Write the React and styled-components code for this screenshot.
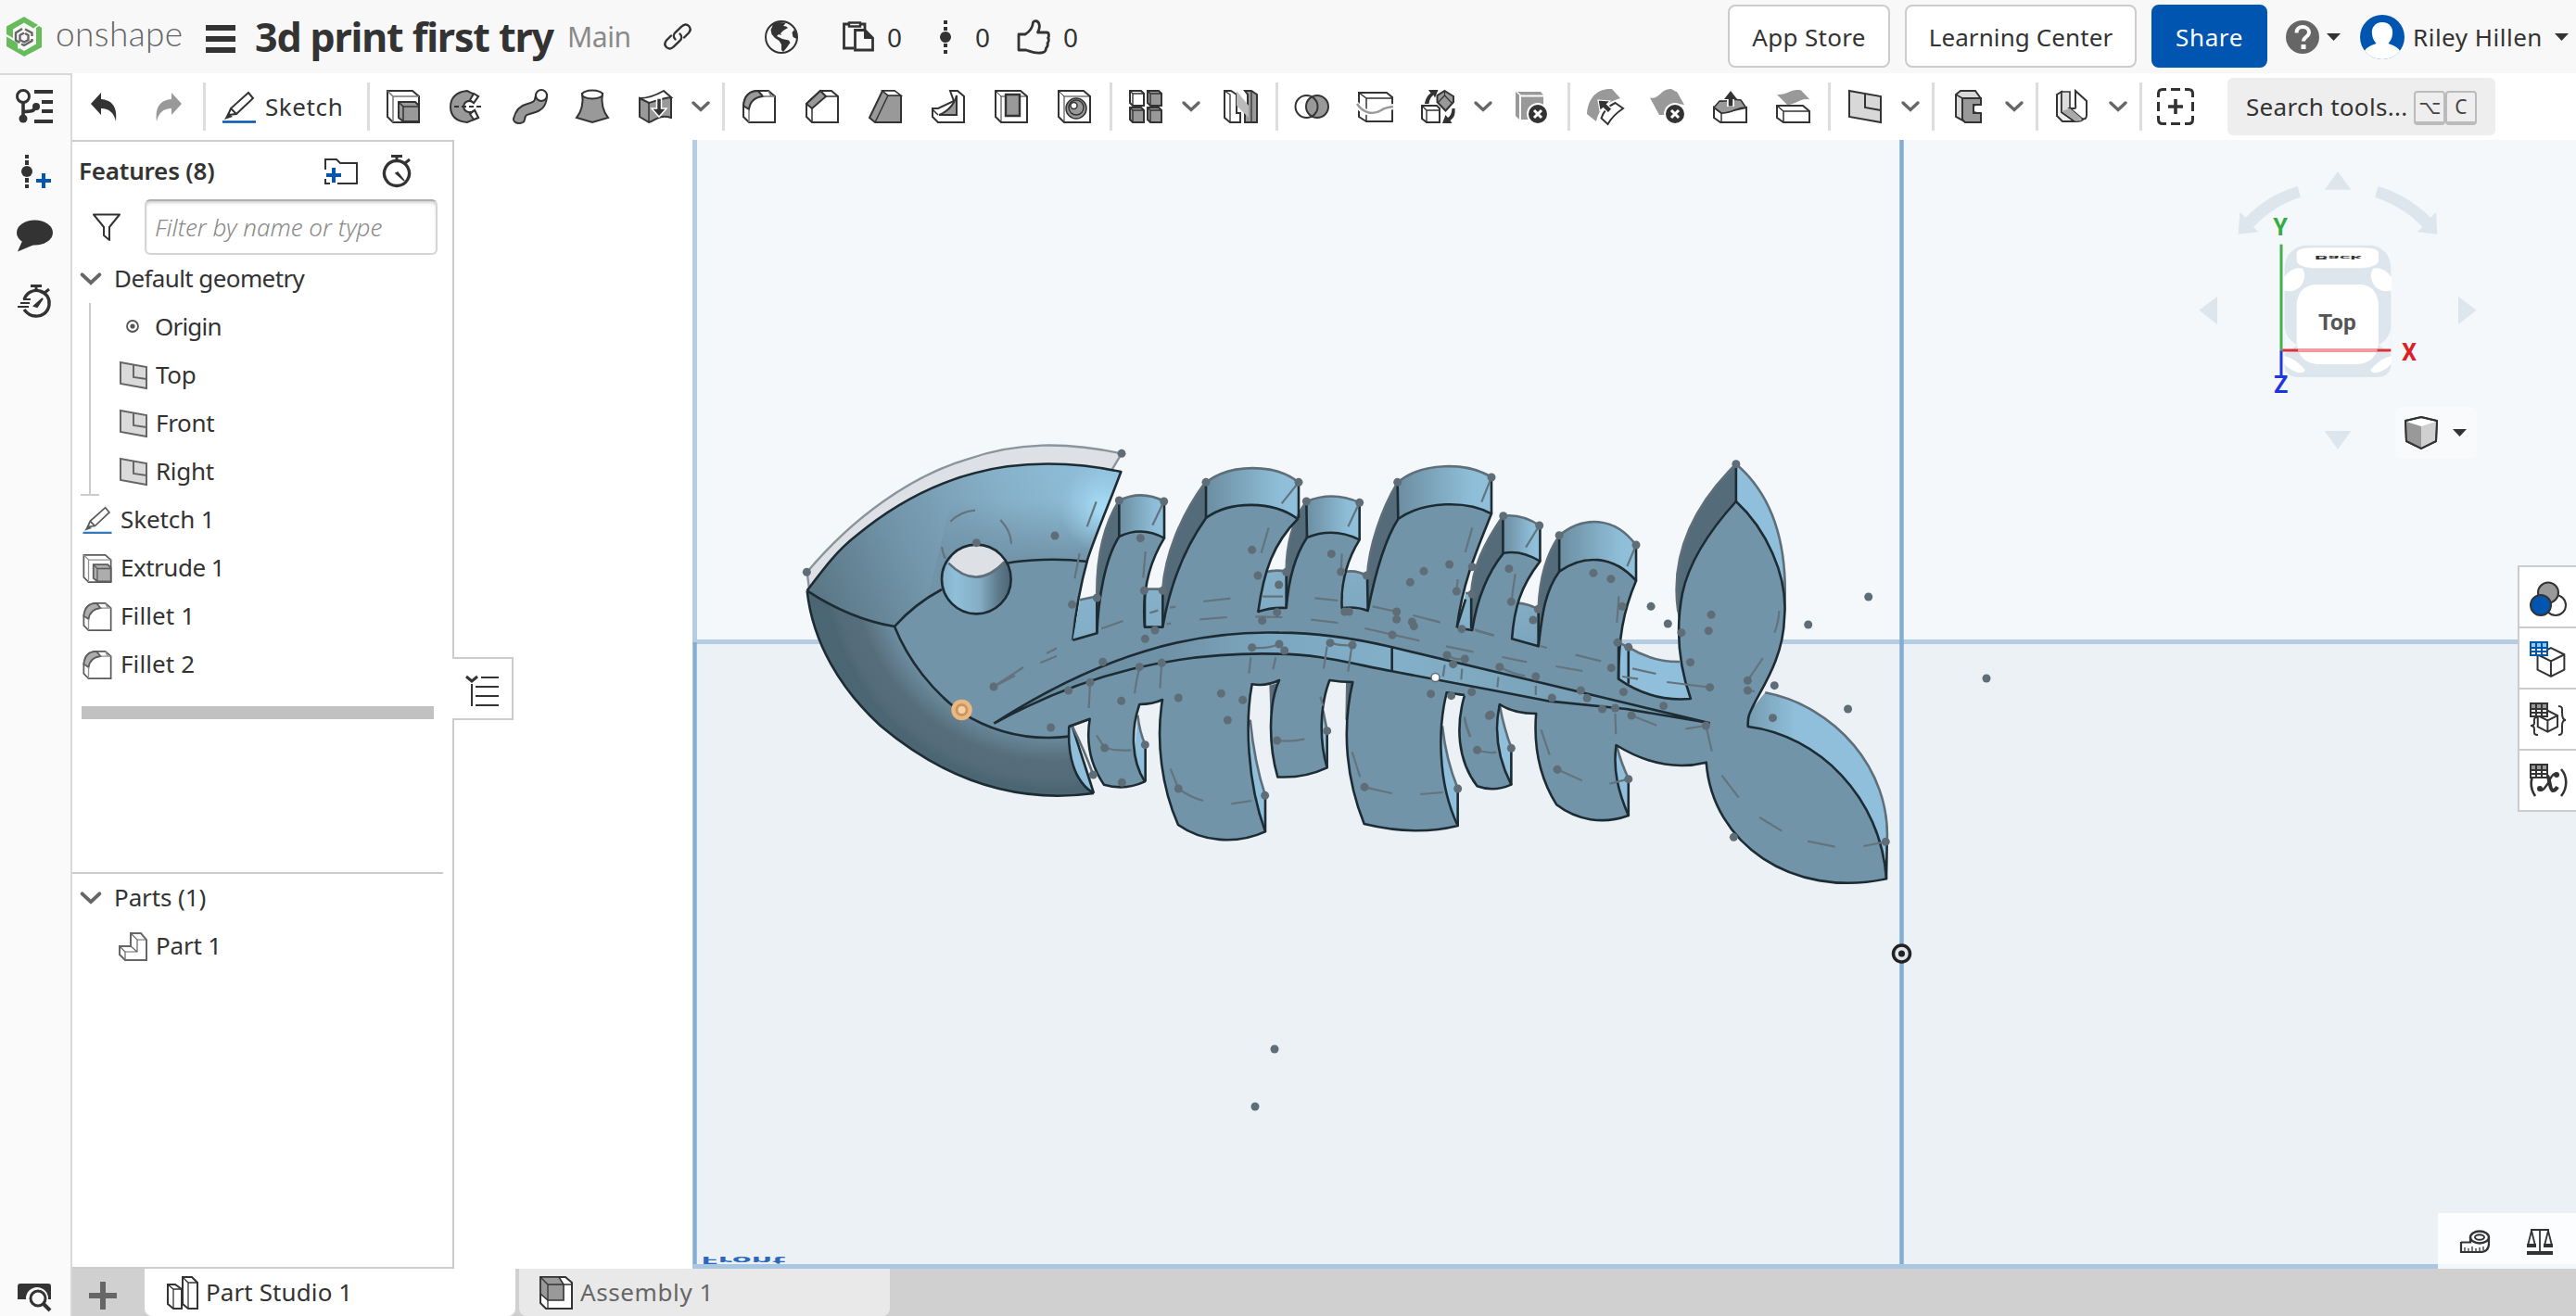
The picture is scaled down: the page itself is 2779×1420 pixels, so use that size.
import React from "react";
import styled, { createGlobalStyle } from "styled-components";

const INK = "#333333";
const GREY = "#999999";
const LINE = "#cccccc";
const BLUE = "#0055b0";

const Global = createGlobalStyle`
  * { box-sizing: border-box; }
  body { margin: 0; background: #fff; }
`;

const Page = styled.div`
  display: flex;
  flex-direction: column;
  width: 2779px;
  height: 1420px;
  overflow: hidden;
  color: ${INK};
  font-family: "Noto Sans", "Open Sans", sans-serif;
  font-size: 26px;
  line-height: 36px;
`;

const Text = styled.span`
  white-space: nowrap;
  letter-spacing: ${(p) => p.$ls || 0}px;
  color: ${(p) => p.$color || "inherit"};
  font-size: ${(p) => p.$size || 26}px;
  font-weight: ${(p) => p.$weight || 400};
  margin-left: ${(p) => p.$ml || 0}px;
`;

/* ---------- header ---------- */

const HeaderBar = styled.header`
  display: flex;
  align-items: center;
  height: 79px;
  flex: none;
  padding: 0 8px 0 7px;
  background: #f8f8f8;
`;

const Brand = styled(Text)`
  font-family: Lato, sans-serif;
  font-weight: 300;
  font-size: 37px;
  line-height: 40px;
  letter-spacing: 0.4px;
  color: #666;
  margin: 0 0 7px 15px;
  width: 138px;
`;

const Burger = styled.div`
  display: flex;
  flex-direction: column;
  gap: 6px;
  width: 32px;
  margin: 5px 0 0 24px;
  i { height: 6px; background: ${INK}; }
`;

const Title = styled.h1`
  margin: 0 0 0 21px;
  width: 324px;
  font-size: 43px;
  line-height: 50px;
  font-weight: 700;
  white-space: nowrap;
  letter-spacing: -1.15px;
`;

const Slot = styled.div`
  display: flex;
  align-items: center;
  flex: none;
  width: ${(p) => p.$w}px;
`;

const Spacer = styled.div`flex: 1;`;

const HeadButton = styled.button`
  flex: none;
  display: flex;
  align-items: center;
  justify-content: center;
  width: ${(p) => p.$w}px;
  height: 68px;
  margin: 0 16px 1px 0;
  padding: 1px 0 0;
  border-radius: 8px;
  border: 2px solid ${(p) => (p.$primary ? BLUE : LINE)};
  background: ${(p) => (p.$primary ? BLUE : "#fff")};
  color: ${(p) => (p.$primary ? "#fff" : INK)};
  font: inherit;
`;

/* ---------- body ---------- */

const Body = styled.div`
  display: flex;
  flex: 1;
  min-height: 0;
`;

const Rail = styled.nav`
  display: flex;
  flex-direction: column;
  flex: none;
  width: 78px;
  padding: 16px 0 3px 17px;
  background: #fafafa;
  border-top: 2px solid #d9d9d9;
  border-right: 2px solid #d9d9d9;
`;

const RailItem = styled.div`
  display: flex;
  align-items: flex-start;
  height: 70px;
`;

const Main = styled.div`
  display: flex;
  flex-direction: column;
  flex: 1;
  min-width: 0;
`;

const Toolbar = styled.div`
  display: flex;
  align-items: center;
  flex: none;
  height: 72px;
  background: #fff;
`;

const ToolGroup = styled.div`
  display: flex;
  align-items: center;
  gap: 32px;
  height: 52px;
  flex: none;
  padding-left: ${(p) => p.$pad || 18}px;
  padding-right: 20px;
  border-left: ${(p) => (p.$bare ? "none" : "3px solid #dddddd")};
`;

const MenuTool = styled.div`
  display: flex;
  align-items: center;
  gap: 21px;
  margin-right: -7px;
`;

const SketchTool = styled.div`
  display: flex;
  align-items: center;
  gap: 10px;
  width: 136px;
`;

const SearchBox = styled.div`
  display: flex;
  align-items: center;
  width: 289px;
  height: 62px;
  margin-left: 16px;
  padding-left: 20px;
  background: #eeeeee;
  border-radius: 6px;
`;

const Keys = styled.div`
  display: flex;
  margin: 2px 0 0 auto;
  padding-right: 20px;
`;

const Key = styled.kbd`
  width: 34px;
  height: 37px;
  border: 2px solid #bbb;
  border-bottom-width: 4px;
  border-radius: 4px;
  font-family: "Noto Sans", "DejaVu Sans", sans-serif;
  font-size: 21px;
  line-height: 31px;
  text-align: center;
  color: #444;
`;

const Workspace = styled.div`
  display: flex;
  flex: none;
  height: 1218px;
`;

const Panel = styled.aside`
  display: flex;
  flex-direction: column;
  flex: none;
  width: 412px;
  background: #fff;
  border: 2px solid ${LINE};
  border-left: 0;
`;

const PanelHead = styled.div`
  display: flex;
  align-items: center;
  height: 62px;
  padding: 2px 44px 0 7px;
  span { margin-bottom: 2px; }
`;

const FilterRow = styled.div`
  display: flex;
  align-items: center;
  height: 60px;
  padding-left: 22px;
`;

const FilterInput = styled.input`
  width: 316px;
  height: 60px;
  margin-left: 26px;
  padding: 0 0 1px 9px;
  border: 2px solid #d5d5d5;
  border-top-color: #b0b0b0;
  border-radius: 6px;
  box-shadow: inset 0 3px 4px -2px #bbb;
  font: italic 26px "Noto Sans", sans-serif;
  letter-spacing: 0;
  &::placeholder { color: #8a8a8a; opacity: 1; font-weight: 300; }
`;

const Row = styled.div`
  display: flex;
  align-items: center;
  flex: none;
  height: 52px;
  padding-left: ${(p) => p.$indent}px;
  gap: ${(p) => p.$gap || 10}px;
  span { margin-bottom: 2px; }
`;

const Branch = styled.div`
  margin-left: 18px;
  border-left: 2px solid ${LINE};
  height: 208px;
  position: relative;
  &::after {
    content: "";
    position: absolute;
    left: -11px;
    bottom: 0;
    width: 20px;
    height: 2px;
    background: ${LINE};
  }
`;

const RollbackBar = styled.div`
  height: 14px;
  width: 380px;
  margin: 19px 0 0 10px;
  background: #c1c1c1;
  flex: none;
`;

const PartsSection = styled.section`
  margin-top: auto;
  width: 400px;
  height: 426px;
  border-top: 2px solid ${LINE};
`;

const Viewport = styled.main`
  position: relative;
  flex: 1;
  overflow: visible;
  > svg { display: block; }
`;

const ListToggle = styled.div`
  position: absolute;
  left: -2px;
  top: 558px;
  width: 66px;
  height: 68px;
  padding: 16px 0 0 14px;
  background: #fff;
  border: 2px solid ${LINE};
  border-left: 0;
`;

const SidePanel = styled.div`
  position: absolute;
  right: 0;
  top: 459px;
  width: 63px;
  background: #fff;
  border: 2px solid ${LINE};
  border-width: 2px 0 0 2px;
`;

const SideCell = styled.div`
  height: 66px;
  padding: 14px 0 0 11px;
  border-bottom: 2px solid ${LINE};
`;

const MeasureBar = styled.div`
  position: absolute;
  right: 0;
  bottom: 0;
  display: flex;
  gap: 40px;
  width: 149px;
  height: 60px;
  padding: 17px 0 0 24px;
  background: rgba(255, 255, 255, 0.85);
`;

const ViewMenu = styled.div`
  position: absolute;
  left: 2094px;
  top: 288px;
  display: flex;
  align-items: center;
  gap: 16px;
  width: 88px;
  height: 56px;
  padding-left: 10px;
  background: #f8fafb;
  border-radius: 6px;
`;

const TabBar = styled.footer`
  display: flex;
  flex: none;
  height: 51px;
  background: #d0d0d0;
`;

const AddTab = styled.div`
  width: 78px;
  padding: 14px 0 0 18px;
`;

const Tab = styled.div`
  display: flex;
  align-items: center;
  gap: 8px;
  width: 400px;
  margin-right: 4px;
  padding: 0 0 0 ${(p) => (p.$active ? 24 : 22)}px;
  border-radius: 0 0 8px 8px;
  background: ${(p) => (p.$active ? "#ffffff" : "#e9e9e9")};
  color: ${(p) => (p.$active ? INK : "#666666")};
  span { margin-bottom: 1px; }
`;

/* ---------- icons ---------- */

const Icon = ({ w = 36, h = 36, vb, children, ...rest }) => (
  <svg width={w} height={h} viewBox={vb || `0 0 ${w} ${h}`} fill="none" stroke={INK} strokeWidth="2" style={{ flex: "none", overflow: "visible" }} {...rest}>
    {children}
  </svg>
);

const Chevron = ({ w = 20, h = 12 }) => (
  <Icon w={w} h={h} vb="0 0 20 12" stroke="#666" strokeWidth="3.4" strokeLinecap="round"><path d="M2 2L10 9.500L18 2" /></Icon>
);

const Caret = ({ color = INK }) => (
  <Icon w={15} h={8} stroke="none"><path d="M0 0H15L7.500 8Z" fill={color} /></Icon>
);

const Logo = () => (
  <Icon w={38} h={43} stroke="none">
    <path fill="#66bc5a" d="M19 0L34 9L29 12.500L19 6.500L7 13.500V23L0 19V10.500Z" />
    <path fill="#66bc5a" d="M35 10L38 12V33L19 43L14 40V34L19 37L32 29.500V12Z" />
    <path fill="#66bc5a" d="M0 21.500L12 28.500V34L14 35V40L0 32Z" />
    <path stroke="#666" strokeWidth="2.400" d="M17 13L10 17.500V25.500L14.500 28M16 29.500L19 31L27.500 26V24M27.500 21V17.500L20 13.500M19 17.500L14.500 20V25L19 27.500L23.500 25V20L20 18" />
  </Icon>
);

const LinkIcon = () => (
  <Icon w={30} h={29} strokeWidth="2.400" strokeLinecap="round">
    <path d="M12.500 17.500C10 15 10.500 12 12.500 10L19.500 3.500C22 1 25 1 27 3C29 5 29 8 27 10.500L22 15.500" />
    <path d="M17.500 11.500C20 14 19.500 17 17.500 19L10.500 25.500C8 28 5 28 3 26C1 24 1 21 3 18.500L8 13.500" />
  </Icon>
);

const Globe = () => (
  <Icon>
    <circle cx="18" cy="18" r="17" fill="#f8f8f8" />
    <path fill={INK} stroke="none" d="M9 3L15 2L23 2.500L20 6L23 6.500L25 8L20 11L17 14L18 16L15 15L13 17L17 19L19 20L26 21.500L27.500 24L24 29L20 34L18 32L18 26L15.500 22L11 19L7.500 15L6.500 10L8 7ZM32 10L29.500 13L30.500 18L34.500 20L35 16Z" />
  </Icon>
);

const Clipboard = () => (
  <Icon w={34} h={33} strokeWidth="2.800">
    <path d="M6 3H1.500V29H12M20 3H24V9" />
    <path d="M7 1.500H19V5.500H7Z" strokeWidth="2.400" />
    <path d="M13.500 9.500H24L32.500 18V31H13.500Z" />
    <path d="M23.500 10V18.500H32Z" fill={INK} strokeWidth="1" />
  </Icon>
);

const VersionDot = () => (
  <Icon w={12} h={36} stroke="none" fill={INK}>
    <circle cx="6" cy="18" r="6" />
    <path d="M4 0h4v4H4zM4 7h4v4H4zM4 25h4v4H4zM4 32h4v4H4z" />
  </Icon>
);

const Thumb = () => (
  <Icon w={36} h={38} strokeWidth="2.800" strokeLinejoin="round">
    <path d="M2 16H9C14 13 17 9 17.500 3C19 1 23 1 24 5C25 8 24 11 22.500 14H32C35 14 35 18 33.500 20C35 21 34.500 24 33 25.500C34 28 32.500 30 31.500 31C31.500 34 29 36 26 36C18 37 14 34 10 33H2Z" />
  </Icon>
);

const Help = () => (
  <Icon stroke="none">
    <circle cx="18" cy="18" r="18" fill="#666" />
    <path d="M11.500 13.500C11.500 9 14.500 7 18 7C22 7 25 9.500 25 13C25 17.500 19 18 19 22.500" stroke="#fff" strokeWidth="4" />
    <path d="M16.500 26h5v5h-5z" fill="#fff" />
  </Icon>
);

const Avatar = () => (
  <Icon w={48} h={48} stroke="none">
    <circle cx="24" cy="24" r="24" fill={BLUE} />
    <path fill="#fff" d="M24 8C32 8 36 14 35 21C34.500 26 32 29 30.500 31C36 33 41 35 43 39C38 45 31 48 24 48C17 48 10 45 5 39C7 35 12 33 17.500 31C16 29 13.500 26 13 21C12 14 16 8 24 8Z" />
  </Icon>
);

const box = "M1 1H28L35 7V35H7L1 29Z";

const tools = {
  undo: <Icon w={28} h={31} stroke="none"><path fill={INK} d="M11 0V7C22 8 29 14 27 31C25 22 20 17 11 17V24L0 12Z" /></Icon>,
  redo: <Icon w={28} h={31} stroke="none"><path fill={GREY} d="M17 0V7C6 8 -1 14 1 31C3 22 8 17 17 17V24L28 12Z" /></Icon>,
  sketch: <Icon h={35}><path d="M6 26L9 19L28 2L33 8L15 25Z M9 19L15 25" /><path d="M2 31L6 24L11 28Z" fill={INK} stroke="none" /><path d="M0 33.500H36" stroke={BLUE} strokeWidth="2.600" /></Icon>,
  extrude: <Icon><path d={box} fill="#fff" /><path d="M1 1L7 7H35M7 7V35" stroke="#777" strokeWidth="1.500" /><path d="M13 13H31L35 17V34H18L13 30Z" fill={GREY} /><path d="M13 13L18 18H35M18 18V34" strokeWidth="1.500" /></Icon>,
  revolve: <Icon><path fill={GREY} d="M19 1C7 2 1 9 1 18C1 28 7 34 19 35L31 30L27 22C22 26 16 24 15 18C16 12 22 10 26 14L31 7Z" /><path fill="#fff" d="M31 7L26 14L22 11L26 4ZM31 30L27 22L22 26L26 32Z" /><path d="M5 18H36" strokeDasharray="5 3" /></Icon>,
  sweep: <Icon><path fill={GREY} d="M25 5C24 13 23 13 16 15C7 17 3 23 1 31C0 37 12 38 13 32C14 25 17 27 25 24C34 21 37 15 37 5Z" /><circle cx="31" cy="6" r="6" fill="#fff" /></Icon>,
  loft: <Icon><path fill={GREY} d="M7 4C9 14 6 24 1 30L18 35L35 30C30 24 27 14 29 4Z" /><ellipse cx="18" cy="5" rx="11" ry="4.500" fill="#fff" /></Icon>,
  thicken: <Icon><path fill={GREY} d="M1 9C10 14 20 0 35 9V30C22 26 18 33 11 35L1 29Z" /><path fill="#fff" d="M1 9C10 9 20 5 27 1L35 8C25 9 18 12 11 14Z" /><path d="M11 14V35" strokeWidth="1.500" /><path fill={INK} stroke="#fff" strokeWidth="1.500" d="M19.500 9H24.500V20H30L22 29L14 20H19.500Z" /></Icon>,
  fillet: <Icon><path d="M1 29V17C2 7 7 1 17 1H28L35 7V35H7Z" fill="#fff" /><path d="M1 17C2 7 7 1 17 1L22 7C13 8 8 13 7 21Z" fill={GREY} /><path d="M22 7H35M7 21V35M28 1L31 7" stroke="#777" strokeWidth="1.500" /></Icon>,
  chamfer: <Icon><path d="M1 29V15L16 1H28L35 7V35H7Z" fill="#fff" /><path d="M1 15L16 1L22 7L7 20Z" fill={GREY} /><path d="M22 7H35M7 20V35" strokeWidth="1.500" /></Icon>,
  draft: <Icon><path d="M1 30L15 1H28L35 7V35H7Z" fill={GREY} /><path d="M15 1L21 6L7 35M21 6H35" strokeWidth="1.500" /><path d="M15 1H28L35 6H21Z" fill="#fff" strokeWidth="1.500" /></Icon>,
  rib: <Icon><path d="M1 20H7L24 12L20 1H28L35 7V35H7L1 29Z" fill="#fff" /><path d="M27 6V27H8C14 25 24 18 27 6Z" fill={GREY} /><path d="M1 21L7 27" strokeWidth="1.500" /></Icon>,
  shell: <Icon><path d={box} fill="#fff" /><path d="M1 1L7 7H35M7 7V35" strokeWidth="1" /><path d="M12 5H27V28H12Z" fill={GREY} strokeWidth="2.400" /></Icon>,
  hole: <Icon><path d={box} fill="#fff" /><path d="M1 1L7 7H35M7 7V35" strokeWidth="1" /><circle cx="20" cy="20" r="11" fill={GREY} strokeWidth="1.500" /><circle cx="20" cy="19" r="8" fill={GREY} strokeWidth="1.500" /><circle cx="17.500" cy="17" r="3.500" fill="#fff" strokeWidth="1.500" /></Icon>,
  pattern: <Icon>{[[0, 0, "#fff"], [19, 0, GREY], [0, 18, GREY], [19, 18, GREY]].map(([x, y, f]) => (
    <g key={`${x}-${y}`} transform={`translate(${x} ${y})`}><path d="M1 1H13L16 4V17H4L1 14Z" fill={f} /><path d="M1 1L4 4H16M4 4V17" strokeWidth="1.400" /></g>))}</Icon>,
  mirror: <Icon><path d="M1 1H8L14 5V25H18V35H7L1 30Z" fill="#fff" /><path d="M23 1H30L36 5V35H23V25L26 22V5Z" fill={GREY} /><path d="M14 1L27 17V30L14 17Z" fill="#bbb" stroke="none" /><path d="M1 1L7 5V35M30 1V35" strokeWidth="1.300" /></Icon>,
  boolean: <Icon><circle cx="24" cy="18" r="12" fill={GREY} /><circle cx="12.500" cy="18" r="12" /></Icon>,
  split: <Icon><path d="M1 3H31L37 8V34H9L1 29Z" fill="#fff" /><path d="M1 3L9 9H37M9 9V34" strokeWidth="1.500" /><path d="M-2 15C6 26 17 27 25 22C29 19 33 19 39 18" stroke="#fff" strokeWidth="6" /><path d="M-1 15C6 26 17 27 25 22C29 19 33 19 38 18" stroke={GREY} strokeWidth="2.400" /></Icon>,
  transform: <Icon><path d="M1 17H17L20 20V35H6L1 31Z" fill="#fff" /><path d="M1 17L6 22H20M6 22V35" strokeWidth="1.400" /><path d="M25.500 1L35 7V13L26.500 22.500L17.500 13V6Z" fill={GREY} /><path d="M25.500 1V6L33 14M25.500 6L18 14" strokeWidth="1.200" /><path fill={INK} stroke="none" d="M8 0H18.500L15 8.500L13.500 5.500C10 8 9 11 8.500 15H4C5 9 7 6 10.500 3.500ZM36.500 20C37 26 36 30 31.500 33L33.500 36H23L26.500 27L29 30C32 28 33 25 33.500 20Z" /></Icon>,
  remove: <Icon><path d="M0 2L4 5.500V32L0 28ZM2 2H27L30 5.500H6ZM6 7.500H30V32H6Z" fill={GREY} stroke="none" /><circle cx="24" cy="26" r="11" fill={INK} stroke="#fff" /><path d="M20 22L28 30M28 22L20 30" stroke="#fff" strokeWidth="3" /></Icon>,
  replaceFace: <Icon><path d="M0 26C1 8 12 -2 27 -1L36 9C22 13 13 20 10 34Z" fill={GREY} stroke="none" /><path d="M30.500 14L39 20C33 24 27 29 22.500 37L15.500 30.500C18 23 22 18 30.500 14Z" fill="#fff" /><path d="M12 11L25 12L21.500 15.500L27 20.500L23 25L17.500 19.500L14 22.500Z" fill={INK} stroke="#fff" strokeWidth="1.200" /></Icon>,
  deleteFace: <Icon><path d="M0 8.500C10 11 12 -2 23 -1C26 0 27 2 29 2L37 16C30 14 22 18 16 27H10Z" fill={GREY} stroke="none" /><circle cx="27" cy="26" r="11" fill={INK} stroke="#fff" /><path d="M23 22L31 30M31 22L23 30" stroke="#fff" strokeWidth="3" /></Icon>,
  moveFace: <Icon><path d="M1 19L9 25L36 19V35H8L1 30Z" fill="#fff" /><path d="M1 19L7 12C16 13 22 9 30 11L35.500 19C26 18 20 26 9 25Z" fill={GREY} strokeWidth="1.600" /><path d="M9 25V35" strokeWidth="1.500" /><path d="M19 18V7" stroke="#fff" strokeWidth="8" /><path d="M19 17.500V7" strokeWidth="4.500" /><path d="M19 1L26 10H12Z" fill={INK} stroke="none" /></Icon>,
  offsetFace: <Icon><path d="M1 17H29L36 23V35H8L1 30Z" fill="#fff" /><path d="M1 17L8 23H36M8 23V35" strokeWidth="1.500" /><path d="M1 5C12 6 17 -2 27 .5L36.500 10.500C26 8 22 16 12 16Z" fill={GREY} stroke="none" /></Icon>,
  plane: <Icon><path d="M1 1L35 7V35L1 29Z" fill="#d8d8d8" /><path d="M18 4V19L35 22" /></Icon>,
  frame: <Icon><path d="M4 5L9 1H25L30 8V14L23 17V24L31 26V35H15L4 29Z" fill="#d8d8d8" /><path d="M11 9H31V16H23V25H31V35H14L11 32Z" fill={GREY} /><path d="M4 5L11 9V32" strokeWidth="1.500" /></Icon>,
  sheet: <Icon><path d="M1 5L6 2V24L20 34H7L1 28Z" fill="#eee" /><path d="M6 2H15V20L30 31C28 35 24 34 20 34L6 24Z" fill="#ddd" strokeWidth="1.600" /><path d="M21 1L33 12V27C33 31 31 32 28 31L15 20H20C22 20 21 17 21 16Z" fill="#fff" /><path d="M6 23L15 20L28 31L22 34Z" fill="#aaa" stroke="none" /></Icon>,
  custom: <Icon w={40} h={40} strokeWidth="3"><path d="M1.500 10V6C1.500 3 3 1.500 6 1.500H10M15 1.500H25M30 1.500H34C37 1.500 38.500 3 38.500 6V10M38.500 15V25M38.500 30V34C38.500 37 37 38.500 34 38.500H30M25 38.500H15M10 38.500H6C3 38.500 1.500 37 1.500 34V30M1.500 25V15" /><path d="M20 12V28M12 20H28" strokeWidth="3.600" /></Icon>,
};

const PlaneIcon = () => (
  <Icon w={30} h={30} stroke="#666"><path d="M1 1L29 6V29L1 24Z" fill="#dadada" /><path d="M15 4V17L29 19" /></Icon>
);

const Small = ({ name }) => (
  <svg width="32" height="31" viewBox="0 0 36 36" style={{ flex: "none", opacity: 0.8 }}>
    {React.cloneElement(tools[name], { w: 36, h: 36 })}
  </svg>
);

const Watch = ({ fast }) => (
  <Icon w={fast ? 36 : 32} strokeWidth="3.400">
    <g transform={fast ? "translate(4 0)" : undefined}>
      <path d={fast ? "M3 16C6 8 14 5 20 7C27 9 31 15 30 22C29 30 22 35 15 34C10 34 6 31 3 27" : "M16 6.500a13.500 13.500 0 1 0 .01 0Z"} />
      <path d="M10 1.500H22M16 2V7M25 9L30 5" strokeWidth="3" />
      {fast ? <path d="M14 23L23 15L17 24Z" fill={INK} strokeWidth="2" /> : <path d="M15 20L24 28L17 19Z" fill={INK} strokeWidth="1.500" />}
    </g>
    {fast && <path d="M6 16H14M3 20H13M0 24H12" strokeWidth="2" />}
  </Icon>
);

const Cube = ({ x, y, s }) => (
  <g transform={`translate(${x} ${y}) scale(${s})`}>
    <path d="M15 1L29 8V24L15 31L1 24V8ZM1 8L15 15L29 8M15 15V31" fill="#fff" vectorEffect="non-scaling-stroke" />
  </g>
);

const Grid = ({ c, f }) => (
  <g><path d="M0 0H20V16H0Z" fill={c} stroke="none" />
    {[2, 8, 14].map((x) => <g key={x} stroke="none"><path d={`M${x} 2h4v4h-4z`} fill={f} /><path d={`M${x} 8h4v2h-4zM${x} 12h4v2h-4z`} fill="#fff" /></g>)}
  </g>
);

/* ---------- model drawing ---------- */

const FACE = "#7194a8";
const WALL = "#546c7a";
const LIT = "#8fbfda";
const VS = { vectorEffect: "non-scaling-stroke" };

const HEAD = "translate(840 440) scale(.33333)";
const MID = "translate(1120 460) scale(.33333)";
const TAIL = "translate(1540 460) scale(.35714 .33333)";

const headDots = [[1110, 148], [91, 532], [894, 414], [640, 437], [696, 903], [881, 1035], [1018, 1188], [938, 915]];
const midDots = [[262, 240], [407, 243], [331, 362], [110, 577], [190, 555], [343, 532], [403, 532], [378, 660], [346, 688], [209, 763], [328, 779], [400, 766], [168, 829], [269, 889], [215, 1041], [346, 1031], [271, 1153], [454, 879], [592, 865], [662, 886], [613, 951], [454, 1173], [734, 1195], [543, 181], [843, 181], [692, 400], [711, 483], [779, 513], [803, 472], [773, 602], [725, 629], [692, 716], [780, 705], [797, 726], [868, 243], [1040, 247], [949, 413], [980, 471], [1063, 483], [992, 600], [1006, 600], [945, 701], [1017, 708], [935, 986], [773, 1017], [1163, 181], [1467, 165], [1248, 469], [1331, 447], [1204, 505], [1354, 534], [1404, 543], [1160, 600], [1160, 625], [1210, 633], [1216, 647], [1146, 675], [1323, 741], [1381, 753], [1343, 770], [1371, 656], [1271, 866], [1337, 872], [1403, 860], [1056, 1168], [1358, 1173]];
const tailDots = [[229, 290], [338, 321], [246, 461], [135, 455], [253, 568], [319, 627], [334, 592], [398, 353], [630, 384], [501, 475], [554, 494], [588, 583], [574, 700], [607, 715], [555, 782], [592, 860], [675, 583], [726, 639], [767, 668], [794, 764], [853, 845], [932, 122], [857, 610], [849, 662], [967, 823], [967, 855], [1048, 839], [1043, 944], [1150, 642], [1332, 552], [1270, 915], [1384, 1345], [925, 1330], [841, 969], [713, 905], [616, 936], [567, 912], [528, 915], [482, 880], [463, 855], [376, 879], [327, 810], [218, 779], [186, 937], [191, 934], [150, 1048], [253, 1042], [392, 1111], [607, 1142]];

const toPage = (list, x, y, sx, sy) => list.map(([u, v]) => [x + u / sx, y + v / sy]);
const dots = [
  ...toPage(headDots, 840, 440, 3, 3),
  ...toPage(midDots, 1120, 460, 3, 3),
  ...toPage(tailDots, 1540, 460, 2.8, 3),
  [2143, 732], [1375, 1132], [1354, 1194],
];

const Edge = ({ d, c = "#1d2b33", w = 2.6 }) => <path d={d} fill="none" stroke={c} strokeWidth={w} strokeLinejoin="round" {...VS} />;
const Back = ({ d }) => <Edge d={d} c="#5f6e78" w={2.6} />;
const Hidden = ({ d }) => <Edge d={d} c="#64737c" w={2.2} />;

const Lin = ({ id, x1, y1, x2, y2, stops, user }) => (
  <linearGradient id={id} x1={x1} y1={y1} x2={x2} y2={y2} gradientUnits={user ? "userSpaceOnUse" : "objectBoundingBox"}>
    {stops.map(([o, c, a]) => <stop key={o} offset={o} stopColor={c} stopOpacity={a === undefined ? 1 : a} />)}
  </linearGradient>
);

const headTop = "M92 592C150 515 190 462 250 415C400 290 560 215 740 190C850 176 980 180 1108 207";

const Model = () => (
  <svg width="2289" height="1218" viewBox="490 151 2289 1218">
    <defs>
      <Lin id="cap" x1="0" y1="0" x2="1" y2="0" stops={[[0, "#6c8da1"], [0.75, "#8dbcd6"], [1, "#90c1dc"]]} />
      <Lin id="notch" x1="0" y1="0" x2="1" y2="1" stops={[[0, "#88b6cf"], [1, "#7ba4bb"]]} />
      <Lin id="eye" x1="0" y1="0" x2="1" y2="0" stops={[[0, "#85b0c9"], [0.2, "#90bfd9"], [0.55, "#84adc5"], [0.8, "#5f7d8e"], [1, "#4d6573"]]} />
      <Lin id="bevel" user x1="130" y1="620" x2="1050" y2="230" stops={[[0, "#5b7786"], [0.3, "#7093a7"], [0.7, "#87b1ca"], [1, "#90c0dc"]]} />
      <Lin id="bevelFade" user x1="0" y1="300" x2="0" y2="495" stops={[[0, FACE, 0], [1, FACE, 1]]} />
      <radialGradient id="glint" gradientUnits="userSpaceOnUse" cx="1050" cy="325" r="140">
        <stop offset="0" stopColor="#a8def9" /><stop offset="1" stopColor="#a0d4ef" stopOpacity="0" />
      </radialGradient>
      <radialGradient id="jaw" gradientUnits="userSpaceOnUse" cx="890" cy="490" r="800">
        <stop offset=".68" stopColor={FACE} /><stop offset=".82" stopColor="#566d7b" /><stop offset=".89" stopColor="#546c79" /><stop offset=".93" stopColor="#4b6672" /><stop offset="1" stopColor="#4c6774" />
      </radialGradient>
      <Lin id="spine" user x1="0" y1="0" x2="2100" y2="0" stops={[[0, "#6b8da1"], [0.2, "#7092a6"], [0.35, "#7ba6bf"], [0.55, "#83b0c9"], [0.75, "#7ba5bc"], [1, FACE]]} />
      <Lin id="fin" x1="0" y1="0" x2="1" y2="0" stops={[[0, "#7499ae"], [0.35, LIT], [1, LIT]]} />
    </defs>

    <rect x="490" y="151" width="2289" height="1218" fill="#fff" />
    <rect x="749" y="151" width="2030" height="542" fill="#f4f8fb" />
    <rect x="749" y="693" width="2030" height="676" fill="#ecf1f5" />
    <path d="M749.500 151V693M747 692.500H2779" stroke="#b5cde4" strokeWidth="5" />
    <path d="M749.500 693V1369M2051.500 151V1369" stroke="#84add4" strokeWidth="4.500" />
    <path d="M747 1366.500H2779" stroke="#a9c7e1" strokeWidth="5" />
    <text transform="translate(756 1356) scale(1 -.43)" fontFamily="Noto Sans, sans-serif" fontWeight="700" fontSize="26" fill="#2a67bd" textLength="92" lengthAdjust="spacingAndGlyphs">Front</text>

    <g transform={HEAD}>
      <path d="M92 532C240 355 430 220 610 167C770 110 930 110 1110 148L1066 222L1108 207L600 400L100 580Z" fill="#dde1e5" />
      <path d="M92 532C240 355 430 220 610 167C770 110 930 110 1110 148L1066 222M92 532L98 580" fill="none" stroke="#8a949b" strokeWidth="2.400" {...VS} />
      <path d={`${headTop}C1070 310 1030 400 1000 490C975 580 962 650 952 752L1100 720L1400 670L1400 930L1242 945Q1190 962 1168 959L1005 1008L940 1032L938 1110L740 1110L560 1030L440 900L330 760Z`} fill={FACE} />
      <path d={`${headTop}C1070 310 1030 400 1000 498C900 486 820 490 738 503C640 520 470 600 375 708C280 692 180 650 92 592Z`} fill="url(#bevel)" />
      <path d="M560 300H1072C1030 400 1010 450 1000 498C900 486 820 490 738 503L600 545L480 620Z" fill="url(#bevelFade)" />
      <path d={`${headTop}C1070 310 1030 400 1000 498C900 486 820 490 738 503Z`} fill="url(#glint)" />
      <path d="M92 592C180 650 280 692 375 708C420 820 500 920 590 985C700 1055 820 1078 940 1064C940 1130 960 1210 1020 1248C750 1285 520 1190 330 1030C200 910 110 760 92 592Z" fill="url(#jaw)" />
      <path d="M943 1036C938 1120 965 1205 1012 1246L1020 1246C1012 1190 975 1110 950 1030Z" fill={LIT} />
      <circle cx="640" cy="555" r="112" fill="url(#eye)" />
      <path d="M550 503Q575 445 640 443Q705 447 732 498Q640 595 550 503Z" fill="#dde1e5" />
      <Back d="M550 503Q640 595 732 498" />
      <circle cx="640" cy="555" r="112" fill="none" stroke="#1d2b33" strokeWidth="2.600" {...VS} />
      <Edge d={`${headTop}C1070 310 1030 400 1000 490C975 580 962 650 952 752`} />
      <Edge d="M738 503C800 492 900 486 1000 498M528 588Q440 635 375 708C420 820 500 920 590 985C700 1055 820 1078 940 1064M92 592C180 650 280 692 375 708" />
      <Edge d="M92 592C110 760 200 910 330 1030C520 1190 750 1285 1020 1248M940 1032C935 1120 955 1210 1020 1248M940 1032L1005 1008M950 1030L1020 1248" />
      <Back d="M950 1030Q990 1110 1018 1188" />
      <Hidden d="M556 368Q590 335 636 332M718 363Q752 400 753 440M528 450Q530 470 540 488M1028 304L998 385M974 472L958 553M696 903L792 840M696 903L765 867M867 795L950 753M847 826L929 791M1045 714L1115 689M1014 762L1098 735M938 915L945 1003" />
    </g>

    <g transform={TAIL}>
      <path d="M228 290C170 380 135 460 132 545L135 660C150 590 170 490 230 410Z" fill={WALL} />
      <path d="M398 355C355 420 338 510 335 590V712C345 630 350 540 398 470Z" fill={WALL} />
      <path d="M115 540H132V660L88 652Z M270 575Q305 575 335 592V712L255 688Z" fill="url(#notch)" />
      <path d="M228 292Q285 282 340 322V437Q285 400 230 410Z" fill="url(#cap)" />
      <path d="M398 355C470 290 565 290 630 385V500C560 405 470 415 398 470Z" fill="url(#cap)" />
      <path d="M577 700L607 715C660 750 710 763 762 762L800 885C730 890 670 870 607 833L577 818Z" fill={LIT} />
      <path d="M932 122C820 240 730 400 757 620L800 620L932 300Z" fill={WALL} />
      <path d="M932 122C1050 230 1090 400 1078 580L1040 560L932 300Z" fill={LIT} />
      <path d="M1020 862C1230 905 1400 1110 1388 1345L1380 1420L960 990V940Z" fill="url(#fin)" />
      <path d="M218 902Q230 975 253 1040V1160L210 1060ZM572 1036Q585 1090 607 1140V1260L568 1140Z" fill={LIT} />
      <Back d="M228 290C170 380 135 460 132 545M132 540H115M228 290Q285 282 340 322M398 355C355 420 338 510 335 590M272 572Q305 575 335 592M398 353C470 290 565 290 630 385M577 700L607 715C660 750 710 763 762 762M932 122C820 240 730 400 757 600M932 122C1050 230 1090 400 1078 600M1020 862C1230 905 1400 1110 1388 1345M218 902Q230 975 253 1040M572 1036Q585 1090 607 1140" />
      <path d="M40 640L88 652L135 660C145 590 170 490 230 410Q285 400 340 437C280 520 262 590 255 688L335 712C345 630 350 540 398 470C470 415 560 415 630 500C590 600 577 690 577 818C640 865 710 890 795 882C755 760 750 650 770 540C790 440 850 340 932 243C1020 330 1090 480 1078 620C1075 760 1000 860 975 925Q967 940 968 972C1180 1000 1370 1200 1386 1465C1100 1530 860 1350 842 1088C740 1115 650 1085 570 1032C560 1110 575 1180 607 1260C530 1290 450 1275 390 1225C340 1140 320 1040 328 930Q260 930 218 900C200 990 215 1080 253 1160Q200 1185 150 1165C90 1080 85 970 112 870L40 862Z" fill={FACE} />
      <Edge d="M115 560L88 652L135 660C145 590 170 490 230 410Q285 400 340 437C280 520 262 590 255 688L335 712C345 630 350 540 398 470C470 415 560 415 630 500C590 600 577 690 577 818C640 865 710 890 795 882C755 760 750 650 770 540C790 440 850 340 932 243C1020 330 1090 480 1078 620C1075 760 1000 860 975 925Q967 940 968 972C1180 1000 1370 1200 1386 1465C1100 1530 860 1350 842 1088C740 1115 650 1085 570 1032C560 1110 575 1180 607 1260C530 1290 450 1275 390 1225C340 1140 320 1040 328 930Q260 930 218 900C200 990 215 1080 253 1160Q200 1185 150 1165C90 1080 85 970 112 870L60 862" />
      <Edge d="M228 292V410M340 322V437M398 355V470M630 385V500M932 122V243M607 715V833M577 700V818M132 545V655M335 592V712M253 1040V1160M607 1140V1260M1388 1345L1386 1465" />
    </g>

    <g transform={MID}>
      <path d="M262 240C205 330 188 440 190 560V670C195 560 215 430 262 357ZM540 180C460 290 410 420 403 527V650C425 520 470 400 543 297ZM868 243C820 310 803 390 803 470V588C810 500 830 420 870 360ZM1163 182C1110 270 1070 390 1065 485L1067 597C1090 480 1120 370 1165 300Z" fill={WALL} />
      <path d="M135 562L192 550L190 670L112 692ZM345 527H403V650H345ZM735 470H803V588Q755 585 712 600ZM995 470Q1035 465 1065 485L1067 597Q1030 582 983 588Z" fill="url(#notch)" />
      <path d="M262 240Q335 205 408 243V362Q335 322 262 357Z" fill="url(#cap)" />
      <path d="M543 182C620 120 770 120 843 182V300C760 240 620 240 543 297Z" fill="url(#cap)" />
      <path d="M868 243Q955 208 1040 247V367Q955 325 870 360Z" fill="url(#cap)" />
      <path d="M1163 182C1240 115 1390 115 1467 165V283C1390 240 1250 240 1165 300Z" fill="url(#cap)" />
      <path d="M322 935Q328 990 347 1032V1150L310 1070ZM686 950Q700 1090 735 1195V1312L684 1150ZM922 920L935 985V1105L914 1020ZM1308 970Q1320 1080 1358 1172V1295L1306 1170Z" fill={LIT} />
      <path d="M752 838L778 830L756 940ZM1000 828H1018L998 960Z" fill={WALL} />
      <Back d="M262 240C205 330 188 440 190 555M262 240Q335 205 408 243M135 562L192 550M345 527H403M540 182C460 290 410 420 403 527M543 182C620 120 770 120 843 182M735 472Q770 463 803 470M868 243C820 310 803 390 803 470M868 243Q955 208 1040 247M995 470Q1035 465 1065 485M1163 182C1110 270 1070 390 1065 485M1163 182C1240 115 1390 115 1467 165M322 935Q328 990 347 1032M686 950Q700 1090 735 1195M922 920L935 985M1308 970Q1320 1080 1358 1172M752 838L755 930M1000 828L998 950" />
      <path d="M60 700L112 692L190 670C195 560 215 430 262 357Q335 322 408 362C360 440 335 540 345 650H403C425 520 470 400 543 297C620 240 760 240 840 300C760 380 730 470 712 600Q755 585 803 588C810 500 830 420 870 360Q955 325 1040 367C995 440 980 520 983 588Q1030 582 1067 597C1090 480 1120 370 1165 300C1250 240 1390 240 1467 283C1420 400 1375 500 1355 652L1420 690V872H1380L1322 862C1295 970 1290 1150 1358 1293C1250 1320 1150 1310 1055 1287C1000 1150 980 990 1018 828Q980 828 943 822C910 910 910 1020 935 1105Q860 1140 775 1135C745 1030 745 900 780 822Q740 842 692 835C670 950 675 1150 735 1312C640 1355 530 1345 453 1290C400 1170 380 1020 402 885Q370 900 328 900C300 980 300 1080 345 1150Q280 1180 213 1160C165 1090 155 1020 167 947L98 972L60 960Z" fill={FACE} />
      <path d="M-143 962C200 740 500 660 780 668C900 668 1040 690 1145 715L1710 850L2171 960L1903 915L1656 890L1474 855L1145 793C1000 765 900 737 780 737C450 728 150 800 -143 962Z" fill="url(#spine)" />
      <Edge d="M112 692L190 670C195 560 215 430 262 357Q335 322 408 362C360 440 335 540 345 650H403C425 520 470 400 543 297C620 240 760 240 840 300C760 380 730 470 712 600Q755 585 803 588C810 500 830 420 870 360Q955 325 1040 367C995 440 980 520 983 588Q1030 582 1067 597C1090 480 1120 370 1165 300C1250 240 1390 240 1467 283C1420 400 1375 500 1355 652M1380 870L1322 862C1295 970 1290 1150 1358 1293C1250 1320 1150 1310 1055 1287C1000 1150 980 990 1018 828Q980 828 943 822C910 910 910 1020 935 1105Q860 1140 775 1135C745 1030 745 900 780 822Q740 842 692 835C670 950 675 1150 735 1312C640 1355 530 1345 453 1290C400 1170 380 1020 402 885Q370 900 328 900C300 980 300 1080 345 1150Q280 1180 213 1160C165 1090 155 1020 167 947L98 972" />
      <Edge d="M-143 962C200 740 500 660 780 668C900 668 1040 690 1145 715L1710 850L2171 960L1903 915L1656 890L1474 855L1145 793C1000 765 900 737 780 737C450 728 150 800 -143 962" />
      <Edge d="M262 240V357M408 243V362M543 182V297M843 182V297M868 243L870 360M1040 247V367M1163 182L1165 300M1467 165V283M190 555V670M345 527V650M403 527V650M803 470V588M1065 485L1067 597M347 1032V1150M735 1195V1312M935 985V1105M1358 1172V1293M1145 715V793" />
      <Hidden d="M407 243L370 320M843 181L788 250M1040 247L1003 325M1467 165L1435 245M347 405L340 490M746 328L722 410M983 412L980 470M1405 328L1382 408M1358 495L1354 534M535 567L622 557M523 625L611 618M726 551H792M703 616L790 618M895 556L970 564M883 626L970 636M1082 583L1160 600M1057 654L1234 694M1213 612L1301 634M1320 712L1408 730M1416 661L1475 677M361 604L388 596M426 587L445 584M416 640L430 638M205 655L275 630M168 829L164 912M328 779Q318 820 312 865M400 766L394 848M688 748L682 800M769 748L760 787M692 716Q740 722 780 705M945 701Q980 712 1017 708M935 712L924 784M1014 718L1003 794M1323 741Q1350 758 1381 753M1316 772L1310 810M1372 785L1369 820M189 1000L215 1041Q255 1052 301 1048M428 1108L454 1173Q490 1200 534 1212M625 1222L690 1212M773 1017Q820 1022 862 1012M1016 1054L1042 1135M1056 1168L1145 1188M1237 1191L1310 1185M1380 940Q1385 980 1399 1006M913 875L922 905" />
    </g>

    <g transform={TAIL}>
      <Hidden d="M338 321L297 392M630 384L603 453M265 478L253 568M578 550L572 636M143 658L200 677M0 624L37 634M340 711L361 717M225 747L300 763M218 779Q255 800 295 808M327 840V870M214 812L211 845M388 777L468 792M447 740L524 760M619 784L690 801M588 810L636 818M723 828L853 845M1013 750L967 823M967 855L988 858M1062 597Q1062 630 1048 668M616 936L692 968M780 979L841 969M567 930L569 997M841 969L859 1052M889 1130L940 1202M1003 1266L1070 1310M1148 1343L1231 1361M1317 1359L1384 1345M112 950L129 1004M150 1048Q180 1060 208 1055M343 982L369 1064M392 1111L467 1147M550 1157L607 1142" />
    </g>

    {dots.map(([x, y], i) => <circle key={i} cx={x} cy={y} r="4.500" fill="#5f6d76" />)}
    <circle cx="1548.500" cy="731" r="4.500" fill="#fff" stroke="#5f6d76" strokeWidth="1.500" />
    <circle cx="1037.500" cy="766" r="9" fill="#fbd0a4" stroke="#edb780" strokeWidth="4.500" />
    <circle cx="1037.500" cy="766" r="5.500" fill="#fbd0a4" stroke="#c99766" strokeWidth="3" />
    <circle cx="2051.500" cy="1029" r="9" fill="#dfe5ea" stroke="#222" strokeWidth="3.500" />
    <circle cx="2051.500" cy="1029" r="3.500" fill="#222" />

    <g transform="translate(2330 160) scale(.33333)" fill="#dee6ed">
      <path d="M576 75L619 134H533ZM533 915H619L576 975ZM127 524L186 480V570ZM1025 524L966 480V570Z" />
      <path d="M446 123L456 158Q370 185 303 255L319 271L254 278L259 207L278 224Q350 150 446 123ZM707 123L696 158Q790 190 850 255L833 271L898 278L894 207L876 224Q800 150 707 123Z" />
      <path d="M465 314H690Q748 330 748 390V710Q740 740 705 741H445Q410 740 404 710V390Q404 330 465 314Z" />
      <path d="M404 570Q404 615 445 637L404 665ZM748 570Q748 615 708 637L748 665Z" fill="#f4f8fb" />
      <path d="M443 340Q443 322 500 322H650Q708 322 708 340V365Q700 387 640 388H510Q450 387 443 365Z" fill="#fff" />
      <path d="M443 505Q448 445 505 441H650Q702 445 708 505V630Q702 695 640 699H510Q450 695 443 630Z" fill="#fff" />
      <path d="M402 418Q430 380 462 390Q478 415 455 448Q430 470 402 460ZM750 418Q722 380 690 390Q674 415 697 448Q722 470 750 460ZM402 672Q440 680 470 718Q465 732 440 724Q410 710 402 695ZM750 672Q712 680 682 718Q687 732 712 724Q742 710 750 695Z" fill="#fff" />
      <path d="M393 311V655" stroke="#3fb24f" strokeWidth="9" />
      <path d="M393 655V741" stroke="#2038dc" strokeWidth="9" />
      <path d="M397 654H748" stroke="#dd3039" strokeWidth="9" />
      <path d="M447 654H704" stroke="#f39ba0" strokeWidth="9" />
      <g fontFamily="Roboto, sans-serif" fontWeight="700" textAnchor="middle">
        <text x="390" y="283" fontSize="76" fill="#32ad42">Y</text>
        <text x="807" y="686" fontSize="76" fill="#db2128">X</text>
        <text x="392" y="793" fontSize="76" fill="#1c37df">Z</text>
        <text x="574" y="589" fontSize="74" fill="#555" textLength="122" lengthAdjust="spacingAndGlyphs">Top</text>
        <text transform="translate(577 347) scale(1 -.32)" fontSize="54" fill="#333" textLength="152" lengthAdjust="spacingAndGlyphs">Back</text>
      </g>
    </g>
  </svg>
);

/* ---------- sections ---------- */

const Header = () => (
  <HeaderBar>
    <Logo />
    <Brand>onshape</Brand>
    <Burger><i /><i /><i /></Burger>
    <Title>3d print first try</Title>
    <Slot $w={117}><Text $size={30} $ls={-0.4} $color="#8a8a8a" $ml={13}>Main</Text></Slot>
    <Slot $w={109}><LinkIcon /></Slot>
    <Slot $w={84}><Globe /></Slot>
    <Slot $w={105}><Clipboard /><Text $size={28} $ml={14}>0</Text></Slot>
    <Slot $w={83}><VersionDot /><Text $size={28} $ml={26}>0</Text></Slot>
    <Slot $w={90}><Thumb /><Text $size={28} $ml={14}>0</Text></Slot>
    <Spacer />
    <HeadButton $w={175}><Text $ls={0.3}>App Store</Text></HeadButton>
    <HeadButton $w={250}><Text $ls={0.1}>Learning Center</Text></HeadButton>
    <HeadButton $w={125} $primary><Text $ls={0.6}>Share</Text></HeadButton>
    <Slot $w={84}><Slot $w={4} /><Slot $w={44}><Help /></Slot><Caret /></Slot>
    <Slot $w={57}><Avatar /></Slot>
    <Slot $w={153}><Text $ls={0.5}>Riley Hillen</Text></Slot>
    <Caret />
  </HeaderBar>
);

const Menu = ({ name }) => <MenuTool>{tools[name]}<Chevron /></MenuTool>;

const Tools = () => (
  <Toolbar>
    <ToolGroup $bare $pad={20}>{tools.undo}<Slot $w={41}><Slot $w={10} />{tools.redo}</Slot></ToolGroup>
    <ToolGroup><SketchTool>{tools.sketch}<Text $ls={0.6}>Sketch</Text></SketchTool></ToolGroup>
    <ToolGroup>{tools.extrude}{tools.revolve}{tools.sweep}{tools.loft}<Menu name="thicken" /></ToolGroup>
    <ToolGroup $pad={19}>{tools.fillet}{tools.chamfer}{tools.draft}{tools.rib}{tools.shell}{tools.hole}</ToolGroup>
    <ToolGroup><Menu name="pattern" />{tools.mirror}</ToolGroup>
    <ToolGroup>{tools.boolean}{tools.split}<Menu name="transform" />{tools.remove}</ToolGroup>
    <ToolGroup>{tools.replaceFace}{tools.deleteFace}{tools.moveFace}{tools.offsetFace}</ToolGroup>
    <ToolGroup $pad={19}><Menu name="plane" /></ToolGroup>
    <ToolGroup $pad={19}><Menu name="frame" /></ToolGroup>
    <ToolGroup $pad={19}><Menu name="sheet" /></ToolGroup>
    <ToolGroup $pad={16}>{tools.custom}</ToolGroup>
    <SearchBox>
      <Text $ls={0.3}>Search tools...</Text>
      <Keys><Key>⌥</Key><Key>C</Key></Keys>
    </SearchBox>
  </Toolbar>
);

const SideRail = () => (
  <Rail>
    <RailItem>
      <Icon w={40}><circle cx="8" cy="7" r="6.500" strokeWidth="3" /><path d="M8 14V30M8 24C9 22 20 26 22 18" strokeWidth="3.600" /><path d="M20 2H40M28 13H40M28 23H40M20 34H40" strokeWidth="4" /><circle cx="8" cy="31" r="4.500" fill={INK} stroke="none" /><circle cx="22" cy="18" r="4" fill={INK} stroke="none" /></Icon>
    </RailItem>
    <RailItem>
      <Icon w={40} stroke="none" fill={INK}><circle cx="12" cy="18" r="6" /><path d="M10 0h4v4h-4zM10 6h4v5h-4zM10 25h4v5h-4zM10 32h4v4h-4z" /><path d="M28 20h4v6h6v4h-6v6h-4v-6h-6v-4h6z" fill={BLUE} /></Icon>
    </RailItem>
    <RailItem>
      <Icon w={40} stroke="none" fill={INK}><ellipse cx="20.500" cy="14" rx="19.500" ry="13.500" /><path d="M7 23L2 34.500L21 26.500Z" /></Icon>
    </RailItem>
    <RailItem><Slot $w={2} /><Watch fast /></RailItem>
    <Spacer />
    <Slot $w={40}>
      <Slot $w={2} />
      <Icon w={36} h={32} strokeWidth="3"><path d="M0 3C0 1 1 0 3 0H33C35 0 36 1 36 3V17H0Z" fill={INK} stroke="none" /><circle cx="21" cy="16" r="10.500" fill="#fafafa" stroke="#fafafa" /><circle cx="22" cy="16" r="8" /><path d="M27 21L35 29" strokeWidth="4" /></Icon>
    </Slot>
  </Rail>
);

const FeaturePanel = () => (
  <Panel>
    <PanelHead>
      <Text $weight={600} $ls={-0.2}>Features (8)</Text>
      <Spacer />
      <Slot $w={62}><Icon h={28}><path d="M1 12V1H13L17 5H35V27H14M1 22V27H6" /><path d="M10 10V26M2 18H18" stroke={BLUE} strokeWidth="4" /></Icon></Slot>
      <Watch />
    </PanelHead>
    <FilterRow>
      <Icon w={30} h={30}><path d="M1 1.500H29L18 15V29L12 24V15Z" strokeLinejoin="round" /></Icon>
      <FilterInput placeholder="Filter by name or type" />
    </FilterRow>
    <Row $indent={8} $gap={13}><Chevron w={24} h={14} /><Text $ls={-0.6}>Default geometry</Text></Row>
    <Branch>
      <Row $indent={31} $gap={10}>
        <Slot $w={28}><Icon w={28} h={14} stroke="#555" strokeWidth="1.800"><circle cx="14" cy="6" r="6" /><circle cx="14" cy="6" r="2.600" fill="#555" stroke="none" /></Icon></Slot>
        <Text $ls={-0.8}>Origin</Text>
      </Row>
      {["Top", "Front", "Right"].map((n) => <Row key={n} $indent={31} $gap={9}><PlaneIcon /><Text $ls={-0.3}>{n}</Text></Row>)}
    </Branch>
    {[["Sketch 1", "sketch", -0.1], ["Extrude 1", "extrude", -0.5], ["Fillet 1", "fillet", 0.1], ["Fillet 2", "fillet", 0.1]].map(([n, i, ls]) => (
      <Row key={n} $indent={11} $gap={9}><Small name={i} /><Text $ls={ls}>{n}</Text></Row>
    ))}
    <RollbackBar />
    <PartsSection>
      <Row $indent={8} $gap={13}><Chevron w={24} h={14} /><Text $ls={-0.1}>Parts (1)</Text></Row>
      <Row $indent={50} $gap={9}>
        <Icon w={31} h={31} stroke="#666"><path d="M1 15H13V1H24L30 8V30H7L1 24Z" fill="#fff" /><path d="M13 1L20 8H30M20 8V21H7M1 15L7 21V30M13 15L20 21" strokeWidth="1.200" /></Icon>
        <Text $ls={-0.2}>Part 1</Text>
      </Row>
    </PartsSection>
  </Panel>
);

export default function App() {
  return (
    <Page>
      <Global />
      <Header />
      <Body>
        <SideRail />
        <Main>
          <Tools />
          <Workspace>
            <FeaturePanel />
            <Viewport>
              <Model />
              <ListToggle>
                <Icon w={36} h={36}><path d="M1 3L7 8L13 3" strokeWidth="3" /><path d="M7 11V35M17 4H36M11 14H36M11 24H36M11 34H36" /></Icon>
              </ListToggle>
              <ViewMenu>
                <Icon w={36} h={36}><path d="M1 5L18 1L35 5L34 27L18 35L2 27Z" fill="#fff" /><path d="M2 6L18 11V34L2 27Z" fill={GREY} stroke="none" /><path d="M34 6L18 11V34L33 27Z" fill="#d0d0d0" stroke="none" /><path d="M1 5L18 1L35 5L34 27L18 35L2 27Z" /></Icon>
                <Caret />
              </ViewMenu>
              <SidePanel>
                <SideCell><Icon w={40} h={40}><circle cx="28" cy="27" r="11" fill="#fff" /><circle cx="20" cy="13.500" r="11" fill={GREY} /><circle cx="12" cy="27" r="11" fill={BLUE} /></Icon></SideCell>
                <SideCell><Icon w={40} h={40}><Cube x={7.500} y={6} s={1.030} /><Grid c={BLUE} f="#8fcdf5" /></Icon></SideCell>
                <SideCell><Icon w={40} h={40}><Cube x={8} y={8} s={0.760} /><path d="M8 16C4 16 5 19 5 22C5 25 3 25 1 25C3 25 5 26 5 29C5 33 4 35 9 35M31 4C36 4 35 7 35 11C35 18 37 19 39 19C37 19 35 20 35 25C35 32 36 35 31 35" /><Grid c={INK} f={GREY} /></Icon></SideCell>
                <SideCell><Icon w={40} h={40}><path d="M7 8C0 15 0 26 6 35M34 6C41 14 41 26 34 35" strokeWidth="2.600" /><path d="M10 28C14 31 17 25 20 21C23 14 26 9 30 12" strokeWidth="2.400" /><path d="M18 13C22 13 21 28 25 29C27 29 29 27 30 25" strokeWidth="4" /><circle cx="11" cy="27" r="3" fill={INK} stroke="none" /><circle cx="29" cy="12" r="3" fill={INK} stroke="none" /><Grid c={INK} f={GREY} /></Icon></SideCell>
              </SidePanel>
              <MeasureBar>
                <Icon w={32} h={28}><path d="M1 14.500H11V9M31 9V16C31 22 27 25 21 25H1V14" strokeWidth="2.200" /><ellipse cx="21" cy="9" rx="10" ry="6.500" strokeWidth="2.400" /><ellipse cx="21" cy="9" rx="5" ry="2.800" /><path d="M5 24V20M9 24V21M13 24V19M17 24V21M21 24V20M25 23V19" strokeWidth="1.300" /></Icon>
                <Icon w={28} h={28}><path d="M4 1H24M14 1V24M5 2L1 18M5 2L9 18M23 2L19 18M23 2L27 18" strokeWidth="1.800" /><path d="M0 16H10V20H0ZM18 16H28V20H18ZM0 24H28V28H0Z" fill={INK} stroke="none" /></Icon>
              </MeasureBar>
            </Viewport>
          </Workspace>
          <TabBar>
            <AddTab><Icon w={30} h={30} stroke="#666" strokeWidth="6"><path d="M15 0V30M0 15H30" /></Icon></AddTab>
            <Tab $active>
              <Icon w={34} h={36}><path d="M1 9H9L16 14V35H7L1 30Z M17 1H27L33 7V35H23L17 30Z" fill="#fff" /><path d="M1 9L7 14H16M7 14V35M17 1L23 7H33M23 7V35" strokeWidth="1.300" /></Icon>
              <Text $ls={0.1}>Part Studio 1</Text>
            </Tab>
            <Tab>
              <Icon><path d={box} fill="#fff" /><path d="M1 1H21L26 9V26H9L1 19Z" fill={GREY} strokeWidth="1.600" /><path d="M1 1L9 9H35M9 9V35" strokeWidth="1.300" /></Icon>
              <Text $ls={0.6}>Assembly 1</Text>
            </Tab>
          </TabBar>
        </Main>
      </Body>
    </Page>
  );
}
